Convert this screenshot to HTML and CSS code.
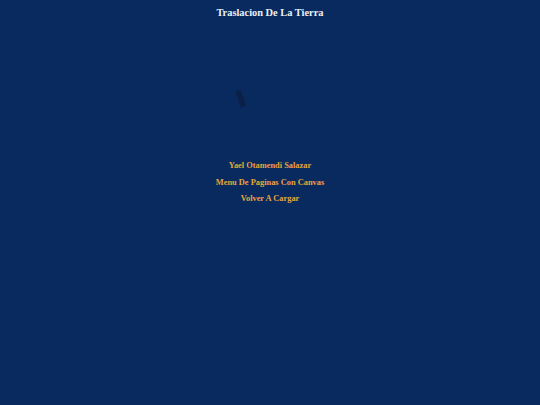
FILE: index.html
```html
<!DOCTYPE html>
<html>
<head>
<meta charset="utf-8">
<link rel="stylesheet" href="styles.css">
</head>
<body>
<div class="page">
  <h1 class="title">Traslacion De La Tierra</h1>
  <svg class="stage" width="300" height="138" viewBox="0 0 300 138">
    <rect x="118" y="67" width="5.5" height="17" fill="#0b2047" transform="rotate(-20 120.75 75.5)"/>
  </svg>
  <nav class="links">
    <a class="link" href="#">Yael Otamendi Salazar</a>
    <a class="link" href="#">Menu De Paginas Con Canvas</a>
    <a class="link" href="#">Volver A Cargar</a>
  </nav>
</div>
</body>
</html>
```
FILE: styles.css
```css
html, body {
  margin: 0;
  padding: 0;
  background: #082a5e;
  height: 100%;
}
.page {
  display: flex;
  flex-direction: column;
  align-items: center;
  font-family: "Liberation Serif", "Times New Roman", serif;
}
.title {
  margin: 6px 0 0 0;
  font-size: 10.4px;
  line-height: 13px;
  font-weight: bold;
  color: #eef0f4;
}
.stage {
  display: block;
  margin-top: 4px;
}
.links {
  display: flex;
  flex-direction: column;
  align-items: center;
  gap: 6px;
}
.link {
  font-size: 8.4px;
  line-height: 10.5px;
  font-weight: bold;
  color: #e6a43c;
  text-decoration: none;
}
```
